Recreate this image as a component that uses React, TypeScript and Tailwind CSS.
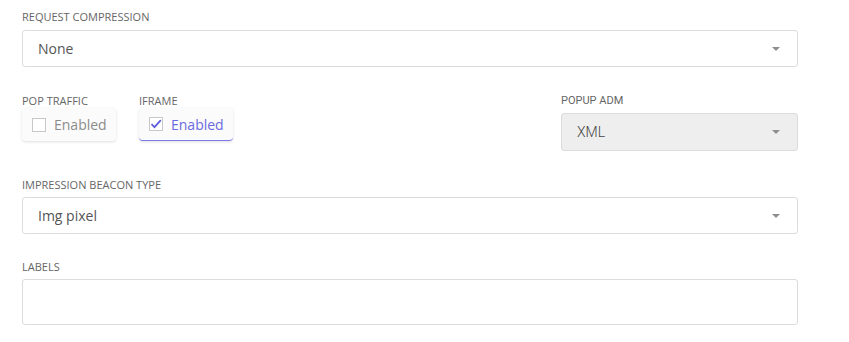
import type { ReactNode } from "react";

const font = { fontFamily: '"Open Sans", "Noto Sans", sans-serif' };

function Label({ children, className = "" }: { children: ReactNode; className?: string }) {
  return (
    <div className={`text-[11px] uppercase leading-[14px] text-[#666] ${className}`}>{children}</div>
  );
}

function Caret() {
  return (
    <svg width="8" height="4" viewBox="0 0 8 4" className="shrink-0">
      <path d="M0 0h8L4 4z" fill="#8f8f8f" />
    </svg>
  );
}

function Select({ value }: { value: string }) {
  return (
    <div className="flex h-[37px] items-center justify-between rounded-[3px] border border-[#dcdcdc] bg-white pl-[15px] pr-[17px] text-[14px] text-[#555]">
      <span>{value}</span>
      <Caret />
    </div>
  );
}

function Toggle({ checked }: { checked: boolean }) {
  return (
    <div
      className={`flex h-[33px] w-[94px] items-center gap-[8px] rounded-[4px] bg-[#fbfbfb] pl-[10px] text-[14px] shadow-[0_1px_3px_rgba(0,0,0,0.13)] ${
        checked ? "border-b border-[#7b7be6] text-[#6a6ae0]" : "text-[#8c8c8c]"
      }`}
    >
      <span className="flex h-[14px] w-[14px] items-center justify-center border border-[#c8c8c8] bg-white">
        {checked && (
          <svg width="12" height="10" viewBox="0 0 12 10">
            <path d="M1.5 5.2 4.5 8.2 10.8 1.2" fill="none" stroke="#5f5fdc" strokeWidth="1.8" />
          </svg>
        )}
      </span>
      <span>Enabled</span>
    </div>
  );
}

export default function App() {
  return (
    <div className="min-h-[342px] w-[849px] bg-white" style={font}>
      <div className="w-[798px] pl-[22px] pt-[10px]">
        <Label className="mb-[6px] font-medium">Request compression</Label>
        <Select value="None" />

        <div className="mt-[27px] flex">
          <div className="w-[117px]">
            <Label className="font-medium">Pop traffic</Label>
            <Toggle checked={false} />
          </div>
          <div>
            <Label className="font-medium">Iframe</Label>
            <Toggle checked />
          </div>
          <div className="ml-auto w-[237px]" style={{ fontFamily: 'Roboto, "Open Sans", sans-serif' }}>
            <Label className="mb-[5px] font-normal">Popup ADM</Label>
            <div className="flex h-[38px] items-center justify-between rounded-[3px] border border-[#dcdcdc] bg-[#eeeeee] pl-[15px] pr-[17px] text-[14px] font-light text-[#444]">
              <span>XML</span>
              <Caret />
            </div>
          </div>
        </div>

        <Label className="mb-[4px] mt-[27px] font-medium">Impression beacon type</Label>
        <div className="pt-[1px]">
          <Select value="Img pixel" />
        </div>

        <Label className="mb-[5px] mt-[26px] font-normal">Labels</Label>
        <div className="h-[46px] rounded-[3px] border border-[#dcdcdc] bg-white" />
      </div>
    </div>
  );
}
